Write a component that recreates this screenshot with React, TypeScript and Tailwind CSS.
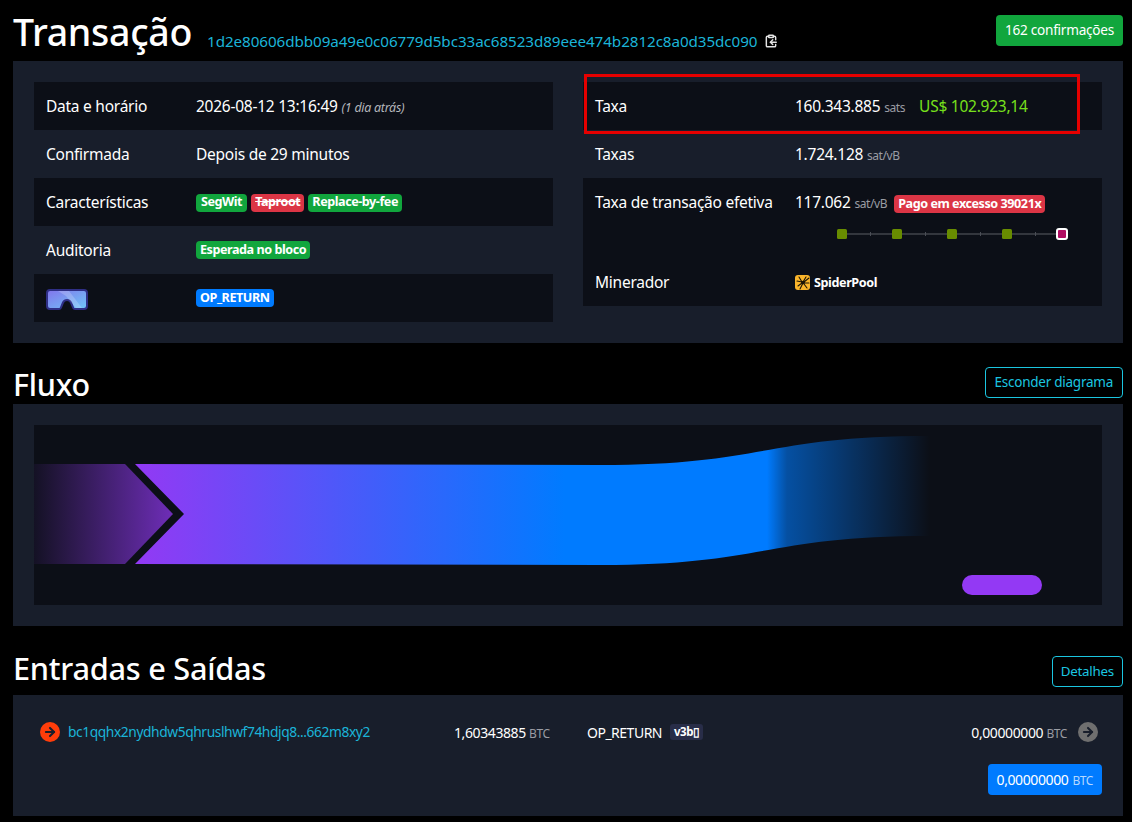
import { ClipboardCopy, ArrowRight } from "lucide-react";
import type { ReactNode } from "react";

function Tag({ color, children, strike, wide }: { color: string; children: ReactNode; strike?: boolean; wide?: boolean }) {
  return (
    <span className={`${color} ${strike ? "line-through" : ""} ${wide ? "px-[5px]" : "px-[4px]"} inline-flex h-[18px] items-center rounded-[4px] align-middle text-[12.6px] font-bold tracking-[-0.45px] text-white`}>
      {children}
    </span>
  );
}

function Row({ label, dark, wide, tags, children }: { label: ReactNode; dark?: boolean; wide?: boolean; tags?: boolean; children: ReactNode }) {
  return (
    <div className={`${dark ? "bg-[#0c0f17]" : ""} flex h-12 items-center pl-3`}>
      <div className={`${wide ? "w-[200px]" : "w-[150px]"} shrink-0 pt-[2px]`}>{label}</div>
      <div className={tags ? "flex" : "pt-[2px]"}>{children}</div>
    </div>
  );
}

function Unit({ children }: { children: ReactNode }) {
  return <span className="text-[12px] tracking-[-0.4px] text-[#9a9ca3]">{children}</span>;
}

function Goggles() {
  return (
    <svg width="42" height="21" viewBox="0 0 42 21" className="block">
      <defs>
        <linearGradient id="gog" x1="0" y1="0" x2="1" y2="1">
          <stop offset="0" stopColor="#8274ec" />
          <stop offset="1" stopColor="#6fc8f8" />
        </linearGradient>
      </defs>
      <path d="M4 1h34a3 3 0 0 1 3 3v13a3 3 0 0 1-3 3h-9a2 2 0 0 1-1.800-1.200L25 13.500q-1.200-2.500-4-2.500t-4 2.500l-2.200 5.300A2 2 0 0 1 13 20H4a3 3 0 0 1-3-3V4a3 3 0 0 1 3-3z" fill="url(#gog)" stroke="#2f2f86" strokeWidth="2" />
      <path d="M15 2h8l13 17h-6L20 7 12 2z" fill="#fff" opacity="0.2" />
    </svg>
  );
}

function SpiderLogo() {
  return (
    <svg width="15" height="15" viewBox="0 0 15 15" className="shrink-0">
      <rect width="15" height="15" rx="3" fill="#fbb52b" />
      <g stroke="#1b1406" strokeWidth="1.100" fill="none" strokeLinecap="round">
        <path d="M7 7 4 2M7 7 2 6M7 8 3 11M8 8 5 14M8 7 11 2M9 7 14 3M9 8 14 8M9 9 12 13" />
      </g>
      <circle cx="8" cy="7.500" r="1.800" fill="#1b1406" />
    </svg>
  );
}

function FeeBar() {
  return (
    <svg width="273" height="14" viewBox="795 227 273 14" className="block">
      <rect x="842" y="233" width="218" height="2" fill="#33363d" />
      {[870, 925, 980, 1035].map((x) => (
        <rect key={x} x={x} y="232" width="1" height="4" fill="#4a4d55" />
      ))}
      {[837, 892, 947, 1002].map((x) => (
        <rect key={x} x={x} y="229" width="10" height="10" rx="1.500" fill="#688c00" />
      ))}
      <rect x="1057" y="229" width="10" height="10" rx="2" fill="#b00d62" stroke="#fff" strokeWidth="2" />
    </svg>
  );
}

function Sankey() {
  return (
    <svg width="1068" height="180" viewBox="34 425 1068 180" className="block">
      <defs>
        <linearGradient id="inFade" gradientUnits="userSpaceOnUse" x1="34" y1="0" x2="184" y2="0">
          <stop offset="0" stopColor="#9339f4" stopOpacity="0.06" />
          <stop offset="1" stopColor="#9339f4" stopOpacity="0.78" />
        </linearGradient>
        <linearGradient id="flow" gradientUnits="userSpaceOnUse" x1="135" y1="0" x2="930" y2="0">
          <stop offset="0" stopColor="#9339f4" />
          <stop offset="0.54" stopColor="#007bff" />
          <stop offset="0.795" stopColor="#007bff" />
          <stop offset="0.82" stopColor="#007bff" stopOpacity="0.6" />
          <stop offset="1" stopColor="#007bff" stopOpacity="0" />
        </linearGradient>
      </defs>
      <path d="M34 464H125L173 514 125 564H34z" fill="url(#inFade)" />
      <path d="M135 464L600 465C765 465 765 436 930 436V536C765 536 765 565 600 565L135 564L184 514z" fill="url(#flow)" />
      <rect x="962" y="575" width="80" height="20" rx="10" fill="#9339f4" />
    </svg>
  );
}

function Circle({ color }: { color: string }) {
  return (
    <span className={`${color} flex h-5 w-5 shrink-0 items-center justify-center rounded-full`}>
      <ArrowRight size={14} strokeWidth={3.5} color="#181e2b" />
    </span>
  );
}

export default function App() {
  return (
    <div className="relative h-[822px] w-[1132px] overflow-hidden bg-black pr-[9px] pl-[13px] font-['Noto_Sans',sans-serif] text-[15.500px] tracking-[-0.25px] text-white">
      {/* cabecalho */}
      <div className="flex h-[61px] items-start">
        <h1 className="mt-[6px] text-[37.500px] leading-[52px] font-medium tracking-[-0.3px]">Transação</h1>
        <div className="mt-[28px] ml-[15px] flex items-center">
          <a className="text-[15.220px] leading-[26px] tracking-[-0.08px] text-[#1bb4d8]">1d2e80606dbb09a49e0c06779d5bc33ac68523d89eee474b2812c8a0d35dc090</a>
          <ClipboardCopy size={14} strokeWidth={2.5} className="ml-[7px] text-[#e4e4e4]" />
        </div>
        <div className="mt-[15px] ml-auto flex h-[31px] items-center rounded-[4px] bg-[#11a63d] px-[9px] text-[13.600px]">162 confirmações</div>
      </div>

      <div className="grid h-[282px] grid-cols-2 items-start gap-[30px] bg-[#181e2b] p-[21px]">
        <div>
          <Row label="Data e horário" dark>
            2026-08-12 13:16:49 <i className="text-[12.4px] text-[#b5b7bd]">(1 dia atrás)</i>
          </Row>
          <Row label="Confirmada">Depois de 29 minutos</Row>
          <Row label="Características" dark tags>
            <span className="mt-[1px] flex gap-[4px]">
              <Tag color="bg-[#11a63d]" wide>SegWit</Tag>
              <Tag color="bg-[#dc3545]" strike>Taproot</Tag>
              <Tag color="bg-[#11a63d]">Replace-by-fee</Tag>
            </span>
          </Row>
          <Row label="Auditoria" tags>
            <Tag color="bg-[#11a63d]">Esperada no bloco</Tag>
          </Row>
          <Row label={<Goggles />} dark tags>
            <Tag color="bg-[#007bff]">OP_RETURN</Tag>
          </Row>
        </div>

        <div>
          <Row label="Taxa" dark wide>
            160.343.885 <Unit>sats</Unit>
            <span className="ml-[14px] text-[#78e01c]">US$ 102.923,14</span>
          </Row>
          <Row label="Taxas" wide>
            1.724.128 <Unit>sat/vB</Unit>
          </Row>
          <div className="bg-[#0c0f17]">
            <div className="flex h-20 pt-[14px] pl-3">
              <div className="w-[200px] shrink-0 leading-5">Taxa de transação efetiva</div>
              <div>
                <div className="h-5 leading-5 whitespace-nowrap">
                  117.062 <Unit>sat/vB</Unit>
                  <span className="ml-[7px]">
                    <Tag color="bg-[#dc3545]">Pago em excesso 39021x</Tag>
                  </span>
                </div>
                <div className="mt-[15px]">
                  <FeeBar />
                </div>
              </div>
            </div>
            <Row label="Minerador" wide>
              <span className="flex items-center gap-[4px] text-[12.6px] font-bold tracking-[-0.4px]">
                <SpiderLogo />
                SpiderPool
              </span>
            </Row>
          </div>
        </div>
      </div>

      {/* fluxo */}
      <div className="flex h-[61px] items-end justify-between">
        <h2 className="text-[30.500px] leading-10 font-medium">Fluxo</h2>
        <button className="mb-[6px] flex h-[31px] items-center rounded-[4px] border border-[#1bc6e0] px-[9px] text-[13.500px] text-[#1bc6e0]">Esconder diagrama</button>
      </div>
      <div className="bg-[#181e2b] p-[21px]">
        <div className="bg-[#0c0f17]">
          <Sankey />
        </div>
      </div>

      {/* entradas e saidas */}
      <div className="flex h-[69px] items-end justify-between">
        <h2 className="mb-[7px] text-[30.700px] leading-10 font-medium">Entradas e Saídas</h2>
        <button className="mb-[8px] flex h-[31px] items-center rounded-[4px] border border-[#1bc6e0] px-[8px] text-[13.400px] text-[#1bc6e0]">Detalhes</button>
      </div>
      <div className="h-[121px] bg-[#181e2b] pt-[27px] pr-[21px] pl-[27px] text-[14px]">
        <div className="flex h-5 items-center">
          <Circle color="bg-[#ff3d0a]" />
          <a className="ml-[8px] w-[386px] text-[13.800px] tracking-[-0.42px] text-[#1bb4d8]">bc1qqhx2nydhdw5qhruslhwf74hdjq8...662m8xy2</a>
          <span className="w-[133px] tracking-[-0.4px]">1,60343885 <Unit>BTC</Unit></span>
          <span className="flex items-center tracking-[-0.5px]">
            OP_RETURN
            <span className="ml-[8px] flex h-4 items-center rounded-[3px] bg-[#282d48] px-[4px] text-[11.5px] font-bold">v3b▯</span>
          </span>
          <span className="ml-auto tracking-[-0.4px]">0,00000000 <Unit>BTC</Unit></span>
          <span className="mr-[4px] ml-[11px]">
            <Circle color="bg-[#6f6f6f]" />
          </span>
        </div>
        <div className="mt-[22px] flex justify-end">
          <div className="flex h-[31px] items-baseline rounded-[4px] bg-[#007bff] px-[9px] pt-[5px] tracking-[-0.4px]">
            0,00000000<span className="ml-[4px] text-[12px] tracking-[-0.4px] text-[#b5d8ff]">BTC</span>
          </div>
        </div>
      </div>

      {/* destaque */}
      <div className="absolute top-[74px] left-[584px] h-[60px] w-[496px] border-[3px] border-[#e60000]" />
    </div>
  );
}
